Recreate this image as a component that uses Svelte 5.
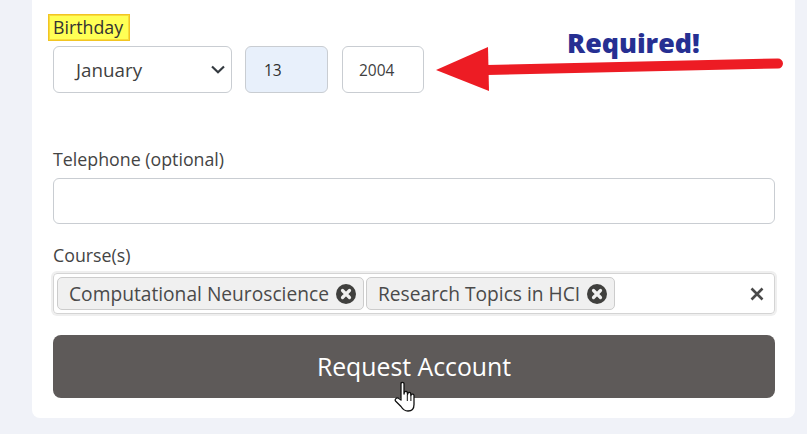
<script lang="ts">
	const courses = ['Computational Neuroscience', 'Research Topics in HCI'];
</script>

<div class="page">
	<form class="card">
		<div class="birthday">
			<span class="mark">Birthday</span>
			<div class="date-row">
				<div class="field month">
					<span>January</span>
					<svg class="chevron" viewBox="0 0 14 9" width="14" height="9"><path d="M1 1.5 7 7.2 13 1.5" fill="none" stroke="#343a40" stroke-width="2.2" /></svg>
				</div>
				<div class="field day">13</div>
				<div class="field year">2004</div>
			</div>
		</div>

		<div class="group phone">
			<label for="tel">Telephone (optional)</label>
			<input id="tel" type="text" />
		</div>

		<div class="group courses">
			<span class="label">Course(s)</span>
			<div class="tags">
				{#each courses as course}
					<span class="tag">
						{course}
						<svg class="remove" viewBox="0 0 20 20" width="20" height="20">
							<circle cx="10" cy="10" r="10" fill="#40403e" />
							<path d="M6.5 6.5 13.5 13.5M13.5 6.5 6.5 13.5" stroke="#f0f0f0" stroke-width="3.2" stroke-linecap="round" />
						</svg>
					</span>
				{/each}
				<svg class="clear" viewBox="0 0 14 14" width="14" height="14"><path d="M1.5 1.5 12.5 12.5M12.5 1.5 1.5 12.5" stroke="#4a4a4a" stroke-width="2.6" /></svg>
			</div>
		</div>

		<button type="button" class="submit"><span>Request Account</span></button>
	</form>

	<!-- annotation drawn over the screenshot -->
	<span class="required">Required!</span>
	<svg class="arrow" viewBox="0 0 807 434" width="807" height="434">
		<path d="M487 70 778 63.5" stroke="#ed1c24" stroke-width="10" stroke-linecap="round" fill="none" />
		<path d="M436 70 488 47 489 91Z" fill="#ed1c24" />
	</svg>

	<!-- hand cursor -->
	<svg class="cursor" viewBox="0 0 24 32" width="24" height="32">
		<path d="M7 2.5C7 1 10 1 10 2.5V13L10.4 11C11.3 10 13 10 13.3 11.5L13.5 13.5 14 12C14.9 11 16.5 11.2 16.7 12.7L16.9 14.5 17.4 13.5C18.4 12.7 19.8 13 20 14.5V23.5C20 27.5 18 30 14 30 10.5 30 8.5 28 7 25.5L1.5 20C0.5 18.5 2.5 16 4.5 17.2L7 19Z" fill="#fff" stroke="#111" stroke-width="1.3" stroke-linejoin="round" />
		<path d="M13.3 14V20M16.9 14.5V20" stroke="#111" stroke-width="1" />
	</svg>
</div>

<style>
	:global(body) {
		margin: 0;
		background: #f0f2f8;
	}

	.page {
		position: relative;
		width: 807px;
		height: 434px;
		overflow: hidden;
		font-family: 'Open Sans', 'Liberation Sans', sans-serif;
		color: #3f3f3f;
	}

	.card {
		box-sizing: border-box;
		width: 763px;
		height: 418px;
		margin-left: 32px;
		padding: 14px 20px 0 21px;
		background: #fff;
		border-radius: 0 0 8px 8px;
		display: flex;
		flex-direction: column;
	}

	.mark {
		display: inline-block;
		box-sizing: border-box;
		height: 27px;
		margin-left: -5px;
		padding: 0 6px 0 4px;
		background: #ffff55;
		border: 1px solid #f2c522;
		box-shadow: inset 0 0 0 1px #f7dc3a;
		font-size: 17.8px;
		line-height: 25px;
		color: #333;
	}

	.date-row {
		display: flex;
		gap: 13px;
		margin-top: 5px;
	}

	.field {
		box-sizing: border-box;
		height: 47px;
		display: flex;
		align-items: center;
		border: 1px solid #c9cdd2;
		border-radius: 6px;
		font-size: 15.5px;
	}

	.month {
		width: 179px;
		padding: 0 6px 0 22px;
		justify-content: space-between;
		font-size: 18.8px;
	}

	.day {
		width: 83px;
		padding-left: 18px;
		background: #e8f0fb;
		color: #2e2e2e;
	}

	.year {
		width: 82px;
		margin-left: 1px;
		padding-left: 16px;
	}

	.group {
		display: flex;
		flex-direction: column;
	}

	.phone {
		margin-top: 54px;
	}

	label,
	.label {
		font-size: 17.8px;
		line-height: 24px;
		color: #444;
	}

	input {
		box-sizing: border-box;
		height: 46px;
		margin-top: 7px;
		border: 1px solid #c9cdd2;
		border-radius: 6px;
		background: #fff;
	}

	.courses {
		margin-top: 19px;
	}

	.tags {
		box-sizing: border-box;
		height: 41px;
		margin: 6px 0 0;
		padding: 0 10px 0 3px;
		display: flex;
		align-items: center;
		gap: 2px;
		border: 1px solid #d4d4d4;
		border-radius: 4px;
		box-shadow: 0 0 0 2px #efefef;
	}

	.tag {
		box-sizing: border-box;
		height: 33px;
		padding: 0 7px 0 11px;
		display: flex;
		align-items: center;
		gap: 7px;
		background: #f0f0f0;
		border: 1px solid #cccccc;
		border-radius: 5px;
		font-size: 19.2px;
		white-space: nowrap;
		color: #4a4a4a;
	}

	.remove {
		flex: none;
	}

	.clear {
		margin-left: auto;
	}

	.submit {
		height: 63px;
		margin-top: 21px;
		padding: 0 0 2px;
		border: 0;
		border-radius: 8px;
		background: #5e5a59;
		color: #fff;
		font: 24.8px 'Open Sans', 'Liberation Sans', sans-serif;
	}

	.required {
		position: absolute;
		left: 567px;
		top: 25px;
		font-size: 26.8px;
		line-height: 36px;
		font-weight: 800;
		color: #262f92;
	}

	.arrow {
		position: absolute;
		left: 0;
		top: 0;
	}

	.cursor {
		position: absolute;
		left: 394px;
		top: 381px;
	}
</style>
